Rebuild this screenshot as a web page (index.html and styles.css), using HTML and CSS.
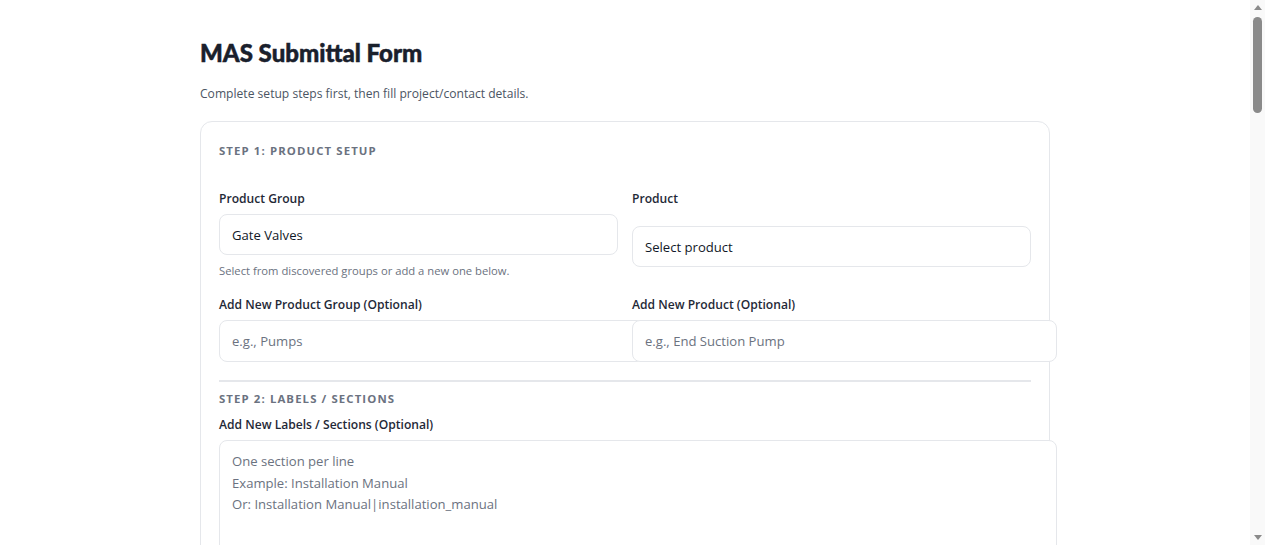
FILE: index.html
```html
<!DOCTYPE html>
<html lang="en">
<head>
<meta charset="utf-8">
<title>MAS Submittal Form</title>
<link rel="stylesheet" href="styles.css">
</head>
<body>
<main class="page">
  <h1 class="title">MAS Submittal Form</h1>
  <p class="subtitle">Complete setup steps first, then fill project/contact details.</p>
  <form class="card">
    <h2 class="step">Step 1: Product Setup</h2>
    <div class="grid">
      <div class="field">
        <label class="label">Product Group</label>
        <select class="select"><option>Gate Valves</option></select>
        <span class="help">Select from discovered groups or add a new one below.</span>
      </div>
      <div class="field">
        <label class="label">Product</label>
        <select class="select select-offset"><option>Select product</option></select>
      </div>
    </div>
    <div class="grid grid-second">
      <div class="field">
        <label class="label">Add New Product Group (Optional)</label>
        <input class="input" type="text" placeholder="e.g., Pumps">
      </div>
      <div class="field">
        <label class="label">Add New Product (Optional)</label>
        <input class="input" type="text" placeholder="e.g., End Suction Pump">
      </div>
    </div>
    <hr class="divider">
    <h2 class="step step-tight">Step 2: Labels / Sections</h2>
    <div class="field">
      <label class="label">Add New Labels / Sections (Optional)</label>
      <textarea class="textarea" rows="7" placeholder="One section per line&#10;Example: Installation Manual&#10;Or: Installation Manual|installation_manual"></textarea>
    </div>
    <hr class="divider">
    <h2 class="step">Step 3: Project Details</h2>
    <div class="grid">
      <div class="field"><label class="label">Project Name</label><input class="input" type="text" placeholder="Project name"></div>
      <div class="field"><label class="label">Project Location</label><input class="input" type="text" placeholder="City, State"></div>
    </div>
    <div class="grid grid-second">
      <div class="field"><label class="label">Engineer</label><input class="input" type="text" placeholder="Engineer"></div>
      <div class="field"><label class="label">Contractor</label><input class="input" type="text" placeholder="Contractor"></div>
    </div>
    <hr class="divider">
    <h2 class="step">Step 4: Contact Details</h2>
    <div class="grid">
      <div class="field"><label class="label">Contact Name</label><input class="input" type="text" placeholder="Full name"></div>
      <div class="field"><label class="label">Email</label><input class="input" type="text" placeholder="name@example.com"></div>
    </div>
    <div class="grid grid-second">
      <div class="field"><label class="label">Phone</label><input class="input" type="text" placeholder="(555) 555-5555"></div>
      <div class="field"><label class="label">Company</label><input class="input" type="text" placeholder="Company"></div>
    </div>
    <div class="field spacer-field">
      <label class="label">Notes</label>
      <textarea class="textarea" rows="20" placeholder="Additional notes"></textarea>
    </div>
  </form>
</main>
<div class="scrollbar" aria-hidden="true">
  <span class="sb-arrow sb-up"></span>
  <span class="sb-thumb"></span>
  <span class="sb-arrow sb-down"></span>
</div>
</body>
</html>
```
FILE: styles.css
```css
html, body {
  margin: 0;
  padding: 0;
  background: #ffffff;
}
body {
  padding-right: 15px;
  font-family: "Open Sans", "Noto Sans", sans-serif;
  color: #1f2937;
}
.page {
  box-sizing: border-box;
  width: 850px;
  min-height: 2924px;
  margin: 0 auto;
  padding-top: 37px;
}
.title {
  margin: 0;
  font-family: "Lato", sans-serif;
  font-weight: 900;
  font-size: 24px;
  line-height: 32px;
  color: #1a202c;
  -webkit-text-stroke: 0.5px #1a202c;
}
.subtitle {
  margin: 16px 0 18px;
  font-size: 12.1px;
  line-height: 18px;
  color: #4b5563;
}
.card {
  border: 1px solid #e5e7eb;
  border-radius: 12px;
  padding: 18px 18px 24px 18px;
  background: #ffffff;
}
.step {
  margin: 3px 0 30px;
  font-size: 11.4px;
  font-weight: 700;
  letter-spacing: 1.1px;
  text-transform: uppercase;
  color: #6b7280;
  line-height: 16px;
}
.step-tight {
  margin: 0 0 8px;
}
.grid {
  display: grid;
  grid-template-columns: 1fr 1fr;
  column-gap: 14px;
}
.grid-second {
  margin-top: 16px;
}
.field {
  display: flex;
  flex-direction: column;
  align-items: flex-start;
  min-width: 0;
}
.label {
  font-size: 12.1px;
  font-weight: 600;
  line-height: 20px;
  color: #1f2937;
  margin-bottom: 5px;
}
.select {
  box-sizing: border-box;
  width: 100%;
  height: 41px;
  padding: 0 12px;
  border: 1px solid #e5e7eb;
  border-radius: 8px;
  background: #ffffff;
  font-family: inherit;
  font-size: 13.1px;
  color: #111827;
  appearance: none;
  -webkit-appearance: none;
}
.select-offset {
  margin-top: 12px;
}
.help {
  margin-top: 8px;
  font-size: 11.25px;
  line-height: 16px;
  color: #6b7280;
}
.input, .textarea {
  box-sizing: content-box;
  width: 100%;
  padding: 11px 12px;
  border: 1px solid #e5e7eb;
  border-radius: 8px;
  background: #ffffff;
  font-family: inherit;
  font-size: 13.1px;
  line-height: 18px;
  color: #111827;
  position: relative;
}
.input {
  height: 18px;
}
.textarea {
  line-height: 21.5px;
  padding-top: 10px;
  resize: vertical;
}
.input::placeholder, .textarea::placeholder {
  color: #6b7280;
  opacity: 1;
}
.divider {
  border: 0;
  border-top: 2px solid #e5e7eb;
  margin: 18px 0 9px;
}
.spacer-field {
  margin-top: 18px;
}

/* browser scrollbar overlay */
.scrollbar {
  position: fixed;
  top: 0;
  right: 0;
  width: 15px;
  height: 100vh;
  background: #f9f9f9;
  display: flex;
  flex-direction: column;
  align-items: center;
  z-index: 10;
}
.sb-arrow {
  flex: 0 0 15px;
  width: 15px;
  display: flex;
  align-items: center;
  justify-content: center;
}
.sb-arrow::before {
  content: "";
  width: 0;
  height: 0;
  border-left: 4px solid transparent;
  border-right: 4px solid transparent;
}
.sb-up::before {
  border-bottom: 5px solid #8a8a8a;
}
.sb-down {
  margin-top: auto;
}
.sb-down::before {
  border-top: 5px solid #8a8a8a;
}
.sb-thumb {
  margin-top: 2px;
  width: 9px;
  height: 96px;
  border-radius: 5px;
  background: #8a8a8a;
}
```
